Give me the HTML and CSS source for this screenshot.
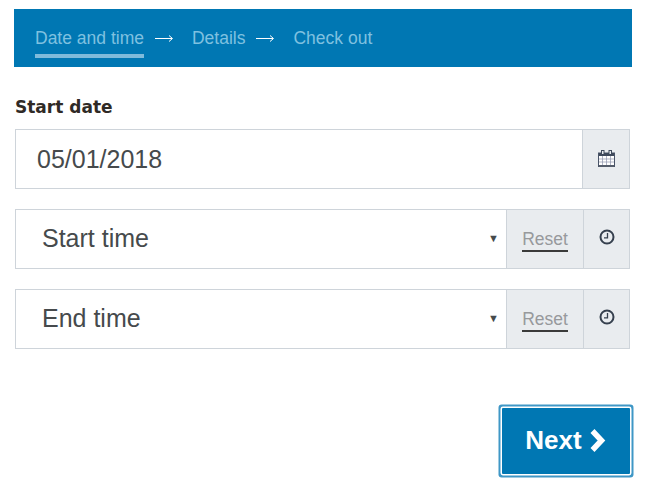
FILE: index.html
```html
<!DOCTYPE html>
<html lang="en">
<head>
  <meta charset="UTF-8" />
  <title>Booking</title>
  <link rel="stylesheet" href="styles.css">
</head>
<body>

  <!-- Steps -->
  <nav class="steps">
    <span class="step step-active">Date and time</span>
    <svg class="step-arrow" width="18" height="9" viewBox="0 0 18 9"><path d="M0 4.500h17M14 1.500l3.500 3-3.500 3" fill="none" stroke="#fff" stroke-width="1"/></svg>
    <span class="step">Details</span>
    <svg class="step-arrow" width="18" height="9" viewBox="0 0 18 9"><path d="M0 4.500h17M14 1.500l3.500 3-3.500 3" fill="none" stroke="#fff" stroke-width="1"/></svg>
    <span class="step">Check out</span>
  </nav>

  <form class="form">
    <label class="field-label">Start date</label>
    <div class="field">
      <div class="field-value date-value">05/01/2018</div>
      <div class="addon addon-cal">
        <svg width="17" height="17" viewBox="0 0 17 17">
          <rect x="0.500" y="3" width="16" height="14" fill="#fff" stroke="#4a5468" stroke-width="1"/>
          <rect x="1" y="3" width="15" height="3" fill="#3f4a5c"/>
          <rect x="3.500" y="0.500" width="2.500" height="4" fill="#e9ecef" stroke="#3f4a5c" stroke-width="1"/>
          <rect x="11" y="0.500" width="2.500" height="4" fill="#e9ecef" stroke="#3f4a5c" stroke-width="1"/>
          <path d="M1 9h15M1 12h15M4.500 6v9M8.500 6v9M12.500 6v9" stroke="#8f95ad" stroke-width="0.700" fill="none"/>
          <rect x="1" y="15" width="15" height="2" fill="#555d6b"/>
        </svg>
      </div>
    </div>

    <div class="field">
      <div class="field-value time-value">Start time<span class="caret">▼</span></div>
      <div class="addon addon-reset"><span class="reset">Reset</span></div>
      <div class="addon addon-clock">
        <svg width="16" height="16" viewBox="0 0 16 16"><circle cx="8" cy="8" r="6.500" fill="#e9ecef" stroke="#36404e" stroke-width="2"/><path d="M8.500 4v4.800H5" fill="none" stroke="#36404e" stroke-width="1.300"/></svg>
      </div>
    </div>

    <div class="field">
      <div class="field-value time-value">End time<span class="caret">▼</span></div>
      <div class="addon addon-reset"><span class="reset">Reset</span></div>
      <div class="addon addon-clock">
        <svg width="16" height="16" viewBox="0 0 16 16"><circle cx="8" cy="8" r="6.500" fill="#e9ecef" stroke="#36404e" stroke-width="2"/><path d="M8.500 4v4.800H5" fill="none" stroke="#36404e" stroke-width="1.300"/></svg>
      </div>
    </div>

    <div class="actions">
      <button class="btn-next" type="button">Next
        <svg width="18" height="23" viewBox="0 0 18 23"><path d="M3.500 2l9 9.500-9 9.500" fill="none" stroke="#fff" stroke-width="5.500"/></svg>
      </button>
    </div>
  </form>

</body>
</html>
```

FILE: styles.css
```css
* {
  margin: 0;
  padding: 0;
  box-sizing: border-box;
}

body {
  background: #fff;
  font-family: "Liberation Sans", Arial, sans-serif;
  color: #464a4c;
  min-height: 100vh;
  padding: 9px 13px 0 14px;
}

.steps {
  display: flex;
  align-items: center;
  height: 58px;
  background: #0077b3;
  padding-left: 21px;
  font-size: 17.500px;
  color: #7fc1e0;
}

.step {
  height: 58px;
  line-height: 59px;
}

.step-active {
  position: relative;
}

.step-active::after {
  content: '';
  position: absolute;
  left: 0;
  right: 0;
  bottom: 9px;
  height: 4px;
  background: #7fbbdb;
}

.step-arrow {
  margin: 1px 19px 0 11px;
}

.form {
  padding-left: 1px;
  padding-right: 2px;
}

.field-label {
  display: block;
  margin-top: 30px;
  margin-bottom: 12px;
  font-family: "DejaVu Sans", sans-serif;
  font-size: 17px;
  line-height: 20px;
  font-weight: bold;
  color: #2f2a26;
}

.field {
  display: flex;
  height: 60px;
  border: 1px solid #ced4da;
  margin-bottom: 20px;
}

.field-value {
  flex: 1;
  display: flex;
  align-items: center;
  background: #fff;
}

.date-value {
  font-size: 25px;
  padding-left: 21px;
}

.time-value {
  font-size: 25px;
  padding-left: 26px;
  padding-bottom: 2px;
  justify-content: space-between;
  padding-right: 7px;
}

.caret {
  font-size: 11px;
  color: #464a4c;
}

.addon {
  display: flex;
  align-items: center;
  justify-content: center;
  background: #e9ecef;
  border-left: 1px solid #ced4da;
}

.addon-cal {
  width: 47px;
}

.addon-reset {
  width: 77px;
}

.addon-clock {
  width: 46px;
}

.addon svg {
  display: block;
  margin-top: -2px;
}

.addon-clock svg {
  margin-top: -4px;
}

.reset {
  font-size: 17.500px;
  color: #97999c;
  border-bottom: 2px solid #3a3a3a;
  line-height: 22px;
  padding-top: 2px;
}

.actions {
  display: flex;
  justify-content: flex-end;
  margin-top: 59px;
}

.btn-next {
  display: flex;
  align-items: center;
  justify-content: center;
  gap: 7px;
  width: 128px;
  height: 66px;
  padding-bottom: 2px;
  background: #0077b3;
  border: none;
  border-radius: 1px;
  box-shadow: 0 0 0 1.500px #fff, 0 0 0 3.500px #3f97c6;
  color: #fff;
  font-family: inherit;
  font-size: 26px;
  font-weight: bold;
}
```
